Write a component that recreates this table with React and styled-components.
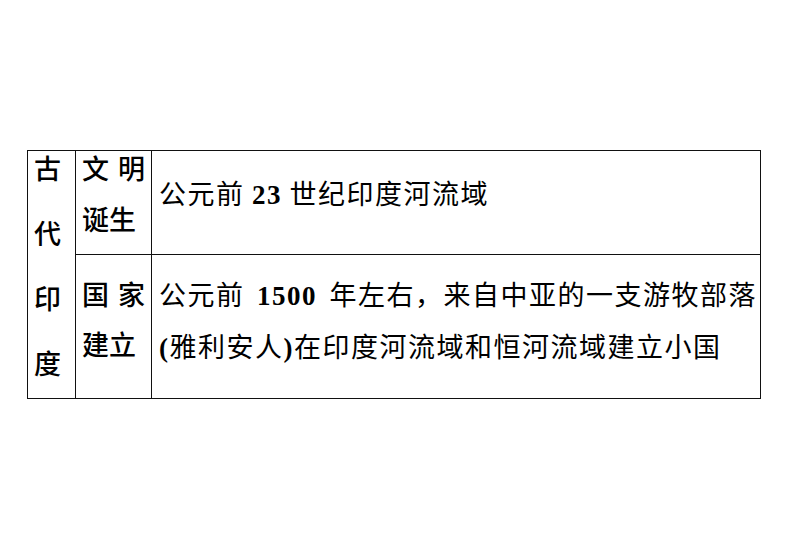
import React from 'react';
import styled, { createGlobalStyle } from 'styled-components';

const GlobalStyle = createGlobalStyle`
  html, body {
    margin: 0;
    padding: 0;
    background: #fff;
  }
  body {
    width: 794px;
    height: 560px;
    overflow: hidden;
    font-family: "Noto Sans CJK SC", "Liberation Serif", sans-serif;
    color: #000;
  }
`;

const Page = styled.div`
  padding: 150px 0 0 27px;
`;

const Table = styled.table`
  border-collapse: collapse;
  table-layout: fixed;
  width: 733px;
`;

const Cell = styled.td`
  border: 1px solid #111;
  padding: ${({ $pad }) => $pad};
  vertical-align: top;
  height: ${({ $h }) => $h}px;
`;

const Stack = styled.div`
  display: flex;
  flex-direction: column;
  gap: ${({ $gap }) => $gap}px;
  padding-top: ${({ $top }) => $top}px;
`;

const Label = styled.div`
  font-size: 27px;
  line-height: 30px;
  font-weight: 500;
  white-space: nowrap;
  text-align: ${({ $spread }) => ($spread ? 'justify' : 'left')};
  text-align-last: ${({ $spread }) => ($spread ? 'justify' : 'auto')};
`;

const Char = styled(Label)`
  padding-left: 6px;
`;

const Line = styled.div`
  font-size: 27px;
  line-height: 30px;
  letter-spacing: 1.5px;
  white-space: nowrap;
  text-align: justify;
  text-align-last: ${({ $spread }) => ($spread ? 'justify' : 'auto')};
`;

const Num = styled.span`
  font-family: "Liberation Serif", serif;
  font-weight: 700;
  margin: 0 ${({ $gap }) => $gap || 0}px;
`;

export default function App() {
  return (
    <Page>
      <GlobalStyle />
      <Table>
        <colgroup>
          <col style={{ width: 48 }} />
          <col style={{ width: 76 }} />
          <col style={{ width: 609 }} />
        </colgroup>
        <tbody>
          <tr>
            <Cell rowSpan={2} $pad="0">
              <Stack $top={2} $gap={35}>
                {['古', '代', '印', '度'].map(c => (
                  <Char key={c}>{c}</Char>
                ))}
              </Stack>
            </Cell>
            <Cell $h={103} $pad="0 6px">
              <Stack $top={2} $gap={21}>
                <Label $spread>文 明</Label>
                <Label>诞生</Label>
              </Stack>
            </Cell>
            <Cell $pad="0 5px 0 7px">
              <Stack $top={27} $gap={20}>
                <Line>公元前 <Num>23</Num> 世纪印度河流域</Line>
              </Stack>
            </Cell>
          </tr>
          <tr>
            <Cell $h={143} $pad="0 6px">
              <Stack $top={24} $gap={20}>
                <Label $spread>国 家</Label>
                <Label>建立</Label>
              </Stack>
            </Cell>
            <Cell $pad="0 5px 0 7px">
              <Stack $top={24} $gap={20}>
                <Line $spread>
                  公元前 <Num $gap={5}>1500</Num> 年左右，来自中亚的一支游牧部落
                </Line>
                <Line>
                  <Num>(</Num>雅利安人<Num>)</Num>在印度河流域和恒河流域建立小国
                </Line>
              </Stack>
            </Cell>
          </tr>
        </tbody>
      </Table>
    </Page>
  );
}
